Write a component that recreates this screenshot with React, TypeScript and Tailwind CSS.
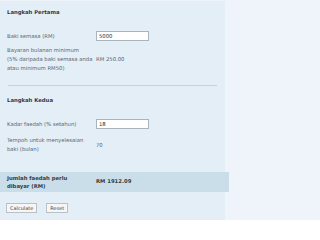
import React from 'react';

const font = { fontFamily: '"DejaVu Sans", Verdana, sans-serif' };

function Row({ label, children, className = '' }: { label: React.ReactNode; children: React.ReactNode; className?: string }) {
  return (
    <div className={`flex items-center ${className}`}>
      <div className="w-[89px] shrink-0 leading-[9px] whitespace-nowrap">{label}</div>
      <div className="flex-1 leading-[9px]">{children}</div>
    </div>
  );
}

function Field({ value }: { value: string }) {
  return (
    <input
      defaultValue={value}
      className="block w-[53px] h-[10px] bg-white border border-[#a9b4bd] px-[2px] text-[5.3px] text-[#333] outline-none"
      style={font}
    />
  );
}

export default function App() {
  return (
    <div className="w-full h-[220px] bg-[#eef4f9] overflow-hidden" style={font}>
      <div className="w-[225px] h-[220px] bg-[#e3eef6] border-t border-[#edf3f8] text-[5.3px] text-[#5a6470] pt-[7px]">
        <div className="px-[7px] font-bold text-[#333c46] leading-[9px]">Langkah Pertama</div>

        <div className="px-[7px] mt-[14px]">
          <Row label="Baki semasa (RM)">
            <Field value="5000" />
          </Row>
          <Row label={<>Bayaran bulanan minimum<br />(5% daripada baki semasa anda<br />atau minimum RM50)</>} className="mt-[5px]">
            <span>RM 250.00</span>
          </Row>
        </div>

        <div className="mx-[8px] mt-[12px] border-t border-[#c4d3df]" />

        <div className="px-[7px] mt-[10px] font-bold text-[#333c46] leading-[9px]">Langkah Kedua</div>

        <div className="px-[7px] mt-[14px]">
          <Row label="Kadar faedah (% setahun)">
            <Field value="18" />
          </Row>
          <Row label={<>Tempoh untuk menyelesaian<br />baki (bulan)</>} className="mt-[7px]">
            <span>70</span>
          </Row>
        </div>

        <div className="mt-[18px] w-[229px] h-[20px] bg-[#cadeea] px-[7px] flex items-center font-bold text-[#333c46]">
          <div className="w-[89px] shrink-0 leading-[8px] whitespace-nowrap">Jumlah faedah perlu<br />dibayar (RM)</div>
          <div>RM 1912.09</div>
        </div>

        <div className="px-[6px] mt-[11px] flex gap-[9px]">
          <button className="h-[10px] px-[3px] bg-[#f6f6f6] border border-[#b9c1c8] text-[5px] leading-none text-[#444]" style={font}>Calculate</button>
          <button className="h-[10px] px-[3px] bg-[#f6f6f6] border border-[#b9c1c8] text-[5px] leading-none text-[#444]" style={font}>Reset</button>
        </div>
      </div>
    </div>
  );
}
